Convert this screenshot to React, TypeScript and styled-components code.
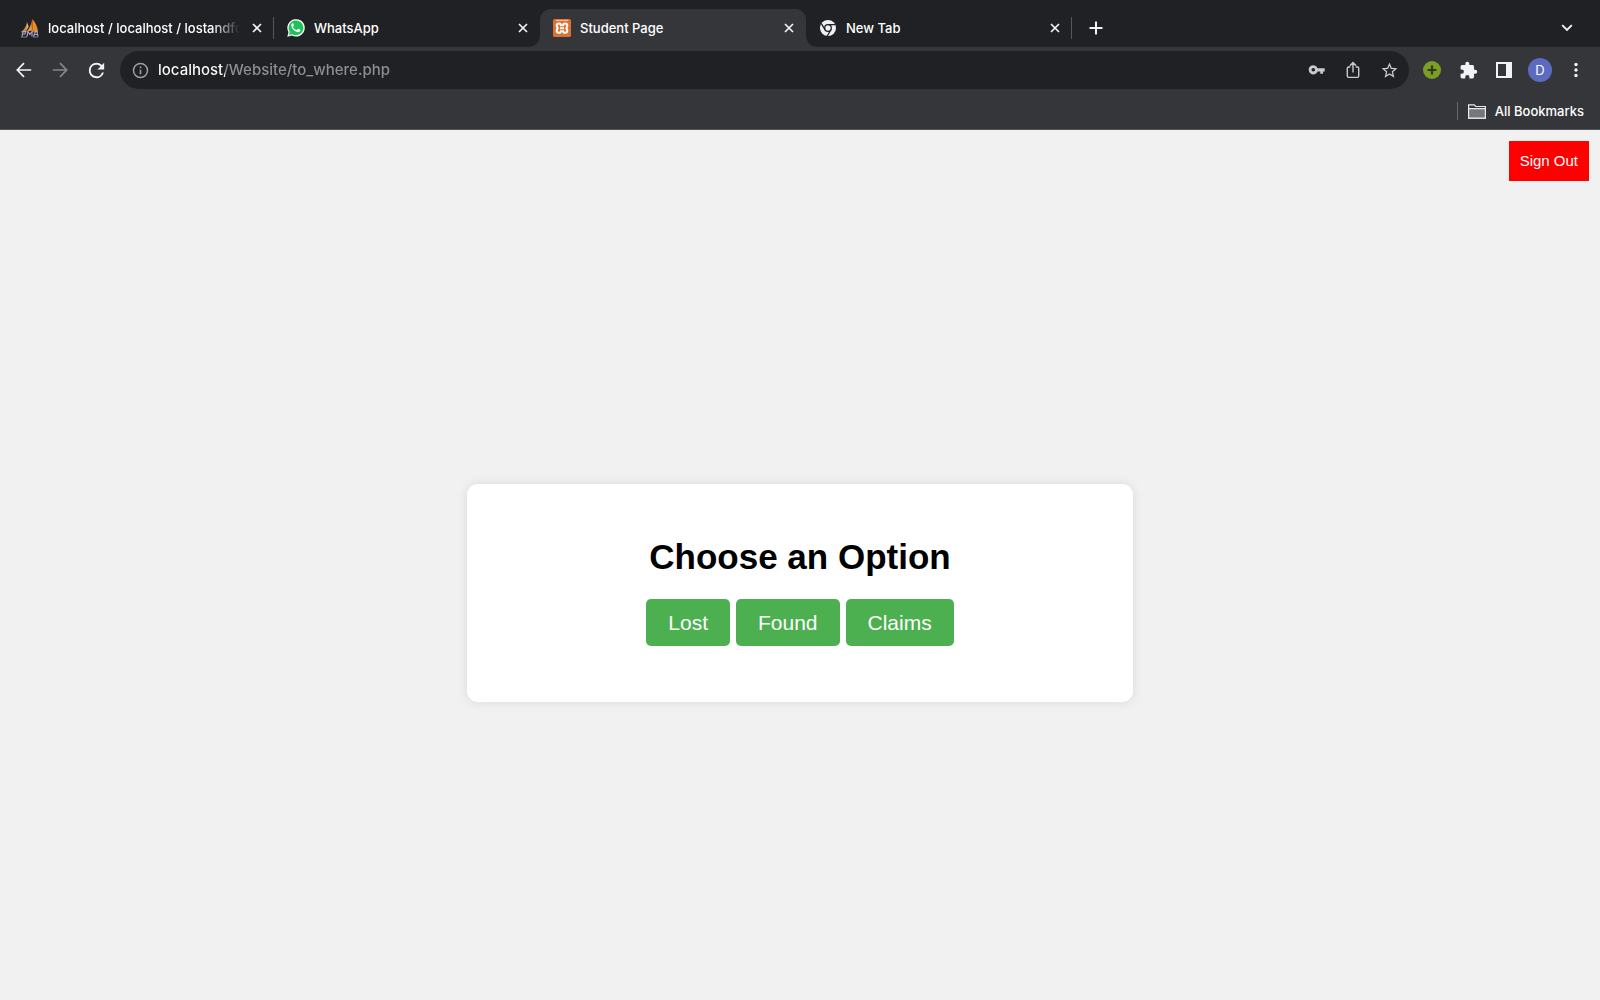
import React from "react";
import styled, { createGlobalStyle } from "styled-components";

const uiFont = `Inter, Roboto, "Liberation Sans", sans-serif`;
const pageFont = `"Liberation Sans", Arial, sans-serif`;

const GlobalStyle = createGlobalStyle`
  *, *::before, *::after { box-sizing: border-box; }
  body { margin: 0; background: #f1f1f1; }
  button, input { font-family: inherit; }
`;

const Window = styled.div`
  min-height: 100vh;
  display: flex;
  flex-direction: column;
`;

const Chrome = styled.header`
  background: #35363a;
  color: #fff;
  font-family: ${uiFont};
  border-bottom: 1px solid #55565a;
`;

const TabStrip = styled.nav`
  display: flex;
  align-items: flex-end;
  height: 47px;
  padding: 0 20px 0 8px;
  background: #202124;
`;

const Tab = styled.div<{ $active?: boolean; $divider?: boolean }>`
  position: relative;
  display: flex;
  align-items: center;
  flex: 0 1 266px;
  min-width: 0;
  height: 38px;
  padding: 0 8px 0 13px;
  border-radius: 11px 11px 0 0;
  background: ${(p) => (p.$active ? "#35363a" : "transparent")};

  &::before,
  &::after {
    content: "";
    position: absolute;
    pointer-events: none;
  }
  ${(p) =>
    p.$active &&
    `
    &::before, &::after { bottom: 0; width: 10px; height: 10px; }
    &::before { left: -10px; background: radial-gradient(circle at 0 0, transparent 9px, #35363a 10px); }
    &::after { right: -10px; background: radial-gradient(circle at 100% 0, transparent 9px, #35363a 10px); }
  `}
  ${(p) =>
    p.$divider &&
    `
    &::after { right: 0; top: 8px; width: 1px; height: 22px; background: #55575b; }
  `}
`;

const TabTitle = styled.a<{ $fade?: boolean }>`
  flex: 1;
  min-width: 0;
  margin: 0 8px 0 9px;
  overflow: hidden;
  white-space: nowrap;
  color: #fff;
  text-decoration: none;
  font-size: 13px;
  line-height: 18px;
  font-weight: 500;
  ${(p) =>
    p.$fade &&
    `mask-image: linear-gradient(to right, #000 calc(100% - 28px), transparent);`}
`;

const IconButton = styled.button<{ $size?: number; $tone?: string }>`
  display: flex;
  align-items: center;
  justify-content: center;
  flex: none;
  width: ${(p) => p.$size ?? 36}px;
  height: ${(p) => p.$size ?? 36}px;
  padding: 0;
  border: 0;
  border-radius: 50%;
  background: none;
  color: ${(p) => p.$tone ?? "#f1f3f4"};
  cursor: pointer;
`;

const StripSpacer = styled.div`
  flex: 1;
`;

const StripAction = styled.div`
  display: flex;
  align-items: center;
  height: 38px;
  padding-left: 8px;
`;

const Toolbar = styled.div`
  display: flex;
  align-items: center;
  padding: 4px 6px;
`;

const AddressBar = styled.form`
  display: flex;
  align-items: center;
  flex: 1;
  min-width: 0;
  height: 38px;
  margin: 0 5px 0 6px;
  padding: 0 2px 0 12px;
  border-radius: 19px;
  background: #202124;
`;

const Address = styled.input`
  flex: 1;
  min-width: 0;
  margin-left: 9px;
  padding: 0;
  border: 0;
  outline: 0;
  font-size: 15px;
  line-height: 24px;
  font-weight: 500;
  color: transparent;
  background: linear-gradient(to right, #fff 67px, #8e9094 67px);
  background-clip: text;
`;

const Avatar = styled.span`
  display: flex;
  align-items: center;
  justify-content: center;
  width: 24px;
  height: 24px;
  border-radius: 50%;
  background: #5c6bc0;
  color: #fff;
  font-size: 13px;
  line-height: 16px;
`;

const BookmarksBar = styled.div`
  display: flex;
  align-items: center;
  justify-content: flex-end;
  height: 36px;
  padding: 0 16px;
`;

const BookmarksButton = styled.button`
  display: flex;
  align-items: center;
  gap: 9px;
  height: 18px;
  padding: 0 0 0 10px;
  border: 0;
  border-left: 1px solid #66686c;
  background: none;
  color: #fff;
  font-size: 13px;
  line-height: 18px;
  font-weight: 500;
  cursor: pointer;
`;

const Page = styled.main`
  flex: 1;
  display: flex;
  flex-direction: column;
  background: #f1f1f1;
  font-family: ${pageFont};
`;

const PageTop = styled.div`
  display: flex;
  justify-content: flex-end;
  padding: 11px 11px 5px;
`;

const SignOut = styled.button`
  padding: 11px;
  border: 0;
  background: #f00;
  color: #fff;
  font-size: 15px;
  line-height: 18px;
  cursor: pointer;
`;

const Center = styled.div`
  flex: 1;
  display: flex;
  align-items: center;
  justify-content: center;
`;

const Card = styled.section`
  width: 100%;
  max-width: 666px;
  padding: 52px 24px 56px;
  border-radius: 11px;
  background: #fff;
  box-shadow: 0 0 11px rgba(0, 0, 0, 0.1);
  text-align: center;
`;

const Heading = styled.h1`
  margin: 0 0 21px;
  color: #000;
  font-size: 35px;
  line-height: 42px;
  font-weight: 700;
`;

const Options = styled.div`
  display: flex;
  justify-content: center;
  gap: 6px;
`;

const OptionButton = styled.button`
  padding: 11px 22px;
  border: 0;
  border-radius: 5px;
  background: #4caf50;
  color: #fff;
  font-size: 21px;
  line-height: 25px;
  cursor: pointer;
`;

const CloseIcon = () => (
  <svg width="10" height="10" viewBox="0 0 10 10" stroke="currentColor" strokeWidth="1.7">
    <path d="M1 1l8 8M9 1L1 9" />
  </svg>
);

const SailsIcon = () => (
  <svg width="18" height="20" viewBox="0 0 18 20">
    <path d="M6 3C6 7 4 10 1 13.500l5-1z" fill="#d98a2b" />
    <path d="M10.500 1c.3 4-1 8-4.500 12.500l5-1z" fill="#f39a2c" />
    <path d="M11.300 1c3 3 4.700 7 5.700 12l-5.700.6z" fill="#f08a1c" />
    <path d="M6.500 4l1 5-2 3z" fill="#c9c9cc" />
    <path d="M1 18.500l1-5h2.500l-.5 2.500H1.800M6 18.500l1-5 1.800 3 2.200-3v5M12.500 18.500l2-5h1.500l1 5M13.500 16.500h3" fill="none" stroke="#a3a5c6" strokeWidth="1.200" />
    <path d="M0 13.800h6M11 13.800h6M0 19h6M12 19h5" stroke="#b8bad4" strokeWidth=".6" />
  </svg>
);

const WhatsAppIcon = () => (
  <svg width="18" height="18" viewBox="0 0 18 18">
    <path d="M.3 17.700l1.200-4.500A8.700 8.700 0 1 1 4.900 16.500z" fill="#fff" />
    <path d="M1.900 16.100l.9-3.200A7.400 7.400 0 1 1 5.200 15.200z" fill="#1fc15b" />
    <path d="M6.500 4.700c-.3-.6-.6-.5-1-.4-.9.500-1.300 1.400-1.100 2.600.4 2.600 3.300 5.600 6.100 6.200 1.300.2 2.700-.5 2.900-1.600.1-.6 0-.7-.4-.9l-1.600-.8c-.3-.1-.5-.1-.7.200l-.7.900c-.2.200-.4.200-.7.100-1.400-.6-2.400-1.500-3.200-2.800-.1-.3-.1-.5.100-.7l.5-.6c.2-.2.2-.4.100-.6z" fill="#fff" />
  </svg>
);

const XamppIcon = () => (
  <svg width="18" height="18" viewBox="0 0 18 18">
    <rect width="18" height="18" rx="1.500" fill="#dd7130" />
    <path d="M3 1.400h12" stroke="#f6d2bb" strokeWidth=".9" />
    <path
      d="M7.900 7.200V6.500c0-1.200-.8-1.900-2-1.900S3.700 5.400 3.700 6.600c0 1 .4 1.600 1 2.600-.6 1-1 1.600-1 2.600 0 1.200 1 2 2.200 2s2-.7 2-1.900v-.7M10.100 7.200V6.500c0-1.200.8-1.900 2-1.900s2.200.8 2.200 2c0 1-.4 1.600-1 2.600.6 1 1 1.600 1 2.600 0 1.200-1 2-2.200 2s-2-.7-2-1.900v-.7M7 9.200h4"
      fill="none"
      stroke="#fff"
      strokeWidth="2"
    />
  </svg>
);

const ChromeIcon = () => (
  <svg width="18" height="18" viewBox="0 0 18 18">
    <circle cx="9" cy="9" r="8" fill="#eef0f2" />
    <circle cx="9" cy="9" r="3.300" fill="none" stroke="#202124" strokeWidth="1.300" />
    <path d="M9 5.600h7.600M6.100 10.800L2.200 4.300M11.900 10.700l-3.800 6.600" stroke="#202124" strokeWidth="1.300" />
  </svg>
);

const ArrowIcon = ({ flip }: { flip?: boolean }) => (
  <svg width="16" height="16" viewBox="0 0 16 16" fill="none" stroke="currentColor" strokeWidth="1.700">
    <path d={flip ? "M.8 8h13.600M8 1.200L14.700 8 8 14.800" : "M15.200 8H1.600M8 1.200L1.300 8 8 14.800"} />
  </svg>
);

const ReloadIcon = () => (
  <svg width="23" height="23" viewBox="0 0 24 24" fill="currentColor">
    <path d="M17.650 6.350A7.960 7.960 0 0 0 12 4a8 8 0 1 0 7.730 10h-2.080A6 6 0 1 1 12 6c1.660 0 3.140.690 4.220 1.780L13 11h7V4z" />
  </svg>
);

const InfoIcon = () => (
  <svg width="17" height="17" viewBox="0 0 17 17" fill="none" stroke="#9aa0a6" strokeWidth="1.500">
    <circle cx="8.500" cy="8.500" r="7" />
    <path d="M8.500 7.700v4.600M8.500 4.600v1.700" strokeWidth="1.600" />
  </svg>
);

const KeyIcon = () => (
  <svg width="18" height="18" viewBox="0 0 18 18" fill="currentColor">
    <path fillRule="evenodd" d="M9.600 7.200a4.600 4.600 0 1 0 0 3.200h2.700v2.400h2.700v-2.400h1.700V7.200zM5.300 10.600a1.800 1.800 0 1 1 0-3.600 1.800 1.800 0 0 1 0 3.600z" />
  </svg>
);

const ShareIcon = () => (
  <svg width="18" height="18" viewBox="0 0 18 18" fill="none" stroke="currentColor" strokeWidth="1.400">
    <path d="M6.300 6H4.500C3.700 6 3.300 6.400 3.300 7.200v7.900c0 .9.400 1.300 1.300 1.300h8.800c.9 0 1.300-.4 1.300-1.300V7.200c0-.8-.4-1.200-1.200-1.200h-1.800M9 11.500V1.800M5.900 4.700L9 1.600l3.100 3.100" />
  </svg>
);

const StarIcon = () => (
  <svg width="19" height="19" viewBox="0 0 24 24" fill="currentColor">
    <path fillRule="evenodd" d="M22 9.240l-7.190-.620L12 2 9.190 8.630 2 9.240l5.460 4.730L5.820 21 12 17.270 18.180 21l-1.630-7.030zM12 15.400l-3.760 2.270 1-4.280-3.320-2.880 4.380-.380L12 6.100l1.710 4.040 4.380.380-3.320 2.880 1 4.280z" />
  </svg>
);

const GreenPlusIcon = () => (
  <svg width="18" height="18" viewBox="0 0 18 18">
    <circle cx="9" cy="9" r="9" fill="#7a9e26" />
    <path d="M9 4.500v9M4.500 9h9" stroke="#2f3a1c" strokeWidth="2.200" />
  </svg>
);

const PuzzleIcon = () => (
  <svg width="19" height="19" viewBox="0 0 24 24" fill="currentColor">
    <path d="M20.500 11H19V7a2 2 0 0 0-2-2h-4V3.500a2.500 2.500 0 0 0-5 0V5H4a2 2 0 0 0-2 2v3.800h1.500a2.700 2.700 0 0 1 0 5.400H2V20a2 2 0 0 0 2 2h3.800v-1.500a2.700 2.700 0 0 1 5.400 0V22H17a2 2 0 0 0 2-2v-4h1.500a2.500 2.500 0 0 0 0-5z" />
  </svg>
);

const PanelIcon = () => (
  <svg width="16" height="16" viewBox="0 0 16 16">
    <path fillRule="evenodd" d="M0 0h16v16H0zM2 2v12h8V2z" fill="currentColor" />
  </svg>
);

const DotsIcon = () => (
  <svg width="4" height="16" viewBox="0 0 4 16" fill="currentColor">
    <circle cx="2" cy="2.500" r="1.700" />
    <circle cx="2" cy="8" r="1.700" />
    <circle cx="2" cy="13.500" r="1.700" />
  </svg>
);

const PlusIcon = () => (
  <svg width="14" height="14" viewBox="0 0 14 14" stroke="currentColor" strokeWidth="2">
    <path d="M7 .5v13M.5 7h13" />
  </svg>
);

const ChevronIcon = () => (
  <svg width="12" height="8" viewBox="0 0 12 8" fill="none" stroke="currentColor" strokeWidth="1.900">
    <path d="M1.200 1.200L6 6l4.800-4.800" />
  </svg>
);

const FolderIcon = () => (
  <svg width="18" height="15" viewBox="0 0 18 15">
    <path d="M.6 14.200V.8h5.600l1.500 1.700h9.700v11.700z" fill="#35363a" stroke="#e8eaed" strokeWidth="1.200" />
    <path d="M.6 4.700h16.800v9.500H.6z" fill="#75777b" stroke="#e8eaed" strokeWidth="1.200" />
  </svg>
);

const tabs = [
  { title: "localhost / localhost / lostandfo", icon: <SailsIcon />, fade: true, divider: true },
  { title: "WhatsApp", icon: <WhatsAppIcon /> },
  { title: "Student Page", icon: <XamppIcon />, active: true },
  { title: "New Tab", icon: <ChromeIcon />, divider: true },
];

const options = ["Lost", "Found", "Claims"];

const softTone = "#c8cacd";

export default function App() {
  return (
    <Window>
      <GlobalStyle />
      <Chrome>
        <TabStrip aria-label="Tabs">
          {tabs.map((t) => (
            <Tab key={t.title} $active={t.active} $divider={t.divider}>
              {t.icon}
              <TabTitle href="#" $fade={t.fade}>{t.title}</TabTitle>
              <IconButton $size={18} aria-label={`Close ${t.title}`}><CloseIcon /></IconButton>
            </Tab>
          ))}
          <StripAction>
            <IconButton $size={32} aria-label="Open a new tab"><PlusIcon /></IconButton>
          </StripAction>
          <StripSpacer />
          <StripAction>
            <IconButton $size={26} aria-label="Search tabs"><ChevronIcon /></IconButton>
          </StripAction>
        </TabStrip>

        <Toolbar>
          <IconButton aria-label="Back"><ArrowIcon /></IconButton>
          <IconButton $tone="#86878a" aria-label="Forward"><ArrowIcon flip /></IconButton>
          <IconButton aria-label="Reload"><ReloadIcon /></IconButton>
          <AddressBar onSubmit={(e) => e.preventDefault()}>
            <InfoIcon />
            <Address aria-label="Address" defaultValue="localhost/Website/to_where.php" spellCheck={false} />
            <IconButton $tone={softTone} type="button" aria-label="Passwords"><KeyIcon /></IconButton>
            <IconButton $tone={softTone} type="button" aria-label="Share"><ShareIcon /></IconButton>
            <IconButton $tone={softTone} type="button" aria-label="Bookmark this page"><StarIcon /></IconButton>
          </AddressBar>
          <IconButton aria-label="Add"><GreenPlusIcon /></IconButton>
          <IconButton aria-label="Extensions"><PuzzleIcon /></IconButton>
          <IconButton aria-label="Side panel"><PanelIcon /></IconButton>
          <IconButton aria-label="Profile"><Avatar>D</Avatar></IconButton>
          <IconButton aria-label="Menu"><DotsIcon /></IconButton>
        </Toolbar>

        <BookmarksBar>
          <BookmarksButton>
            <FolderIcon />
            All Bookmarks
          </BookmarksButton>
        </BookmarksBar>
      </Chrome>

      <Page>
        <PageTop>
          <SignOut>Sign Out</SignOut>
        </PageTop>
        <Center>
          <Card>
            <Heading>Choose an Option</Heading>
            <Options>
              {options.map((o) => (
                <OptionButton key={o}>{o}</OptionButton>
              ))}
            </Options>
          </Card>
        </Center>
      </Page>
    </Window>
  );
}
